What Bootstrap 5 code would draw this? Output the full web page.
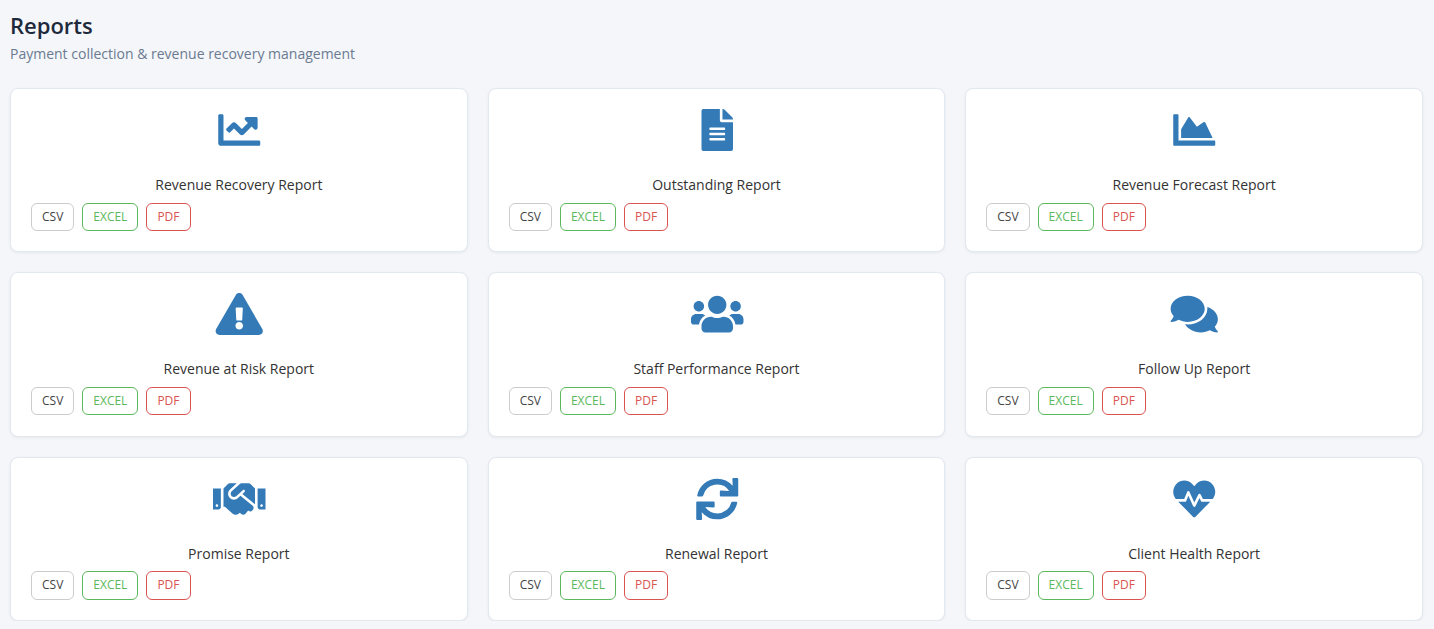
<!DOCTYPE html>
<html lang="en">
<head>
<meta charset="utf-8">
<meta name="viewport" content="width=device-width, initial-scale=1">
<title>Reports</title>
<link href="https://cdn.jsdelivr.net/npm/bootstrap@5.3.0/dist/css/bootstrap.min.css" rel="stylesheet">
<style>
  body { background: #f4f6fa; color: #333; font-family: "Open Sans", sans-serif; font-size: 14px; line-height: 20px; overflow: hidden; }
  .page { padding: 10px 11px 0 10px; }
  .page-title { font-size: 22px; line-height: 30px; font-weight: 600; color: #1e293b; }
  .page-sub { color: #6b7a90; line-height: 20px; margin: 4px 0 24px; }
  .report-row { --bs-gutter-x: 20px; --bs-gutter-y: 20px; }
  .report-card { border: 1px solid #e2e8f0; border-radius: 8px; padding: 20px; box-shadow: 0 1px 3px rgba(0,0,0,.06); height: 164.4px; }
  .report-icon { height: 42px; fill: #337ab7; margin-bottom: 24px; }
  .report-icon path { transform: translateX(5px); }
  .report-icon { overflow: visible; }
  .report-name { margin-bottom: 7.6px; }
  .export { --bs-btn-font-size: 12px; --bs-btn-line-height: 18px; --bs-btn-padding-x: 10px; --bs-btn-padding-y: 4px; --bs-btn-border-radius: 6px; padding-bottom: 4.4px; }
  .export-csv { --bs-btn-color: #444; --bs-btn-border-color: #ccc; }
  .export-excel { --bs-btn-color: #5cb85c; --bs-btn-border-color: #5cb85c; }
  .export-pdf { --bs-btn-color: #d9534f; --bs-btn-border-color: #d9534f; }
</style>
</head>
<body>
<main class="page">
  <h1 class="page-title mb-0">Reports</h1>
  <p class="page-sub">Payment collection &amp; revenue recovery management</p>
  <div class="row report-row" id="reports"></div>
</main>
<script src="https://cdn.jsdelivr.net/npm/bootstrap@5.3.0/dist/js/bootstrap.bundle.min.js"></script>
<script>
const reports = [
  ["Revenue Recovery Report", 512, "M496 384H64V80c0-8.84-7.16-16-16-16H16C7.16 64 0 71.16 0 80v336c0 17.67 14.33 32 32 32h464c8.84 0 16-7.16 16-16v-32c0-8.84-7.16-16-16-16zM464 96H345.94c-21.38 0-32.09 25.85-16.97 40.97l32.4 32.4L288 242.75l-73.37-73.37c-12.5-12.5-32.76-12.5-45.25 0l-68.69 68.69c-6.25 6.25-6.25 16.38 0 22.63l22.62 22.62c6.25 6.25 16.38 6.25 22.63 0L192 237.25l73.37 73.37c12.5 12.5 32.76 12.5 45.25 0l96-96 32.4 32.4c15.12 15.12 40.97 4.41 40.97-16.97V112c.01-8.84-7.15-16-15.99-16z"],
  ["Outstanding Report", 384, "M224 136V0H24C10.7 0 0 10.7 0 24v464c0 13.3 10.7 24 24 24h336c13.3 0 24-10.7 24-24V160H248c-13.2 0-24-10.8-24-24zm64 236c0 6.6-5.4 12-12 12H108c-6.6 0-12-5.4-12-12v-8c0-6.6 5.4-12 12-12h168c6.6 0 12 5.4 12 12v8zm0-64c0 6.6-5.4 12-12 12H108c-6.6 0-12-5.4-12-12v-8c0-6.6 5.4-12 12-12h168c6.6 0 12 5.4 12 12v8zm0-72v8c0 6.6-5.4 12-12 12H108c-6.6 0-12-5.4-12-12v-8c0-6.6 5.4-12 12-12h168c6.6 0 12 5.4 12 12zm96-114.1v6.1H256V0h6.1c6.4 0 12.5 2.5 17 7l97.9 98c4.5 4.5 7 10.6 7 16.9z"],
  ["Revenue Forecast Report", 512, "M500 384c6.6 0 12 5.4 12 12v40c0 6.6-5.4 12-12 12H12c-6.6 0-12-5.4-12-12V76c0-6.6 5.4-12 12-12h40c6.6 0 12 5.4 12 12v308h436zM372.7 159.5L288 216l-85.3-113.7c-5.1-6.8-15.5-6.3-19.9 1L96 248v104h384l-89.9-187.8c-3.2-6.5-11.4-8.7-17.4-4.7z"],
  ["Revenue at Risk Report", 576, "M569.517 440.013C587.975 472.007 564.806 512 527.94 512H48.054c-36.937 0-59.999-40.055-41.577-71.987L246.423 23.985c18.467-32.009 64.72-31.951 83.154 0l239.94 416.028zM288 354c-25.405 0-46 20.595-46 46s20.595 46 46 46 46-20.595 46-46-20.595-46-46-46zm-43.673-165.346l7.418 136c.347 6.364 5.609 11.346 11.982 11.346h48.546c6.373 0 11.635-4.982 11.982-11.346l7.418-136c.375-6.874-5.098-12.654-11.982-12.654h-63.383c-6.884 0-12.356 5.78-11.981 12.654z"],
  ["Staff Performance Report", 640, "M96 224c35.3 0 64-28.7 64-64s-28.7-64-64-64-64 28.7-64 64 28.7 64 64 64zm448 0c35.3 0 64-28.7 64-64s-28.7-64-64-64-64 28.7-64 64 28.7 64 64 64zm32 32h-64c-17.6 0-33.5 7.1-45.1 18.6 40.3 22.1 68.9 62 75.1 109.4h66c17.7 0 32-14.3 32-32v-32c0-35.3-28.7-64-64-64zm-256 0c61.9 0 112-50.1 112-112S381.9 32 320 32 208 82.1 208 144s50.1 112 112 112zm76.8 32h-8.3c-20.8 10-43.9 16-68.5 16s-47.6-6-68.5-16h-8.3C179.6 288 128 339.6 128 403.2V432c0 26.5 21.5 48 48 48h288c26.5 0 48-21.5 48-48v-28.8c0-63.6-51.6-115.2-115.2-115.2zm-223.7-13.4C161.5 263.1 145.6 256 128 256H64c-35.3 0-64 28.7-64 64v32c0 17.7 14.3 32 32 32h65.9c6.3-47.4 34.9-87.3 75.2-109.4z"],
  ["Follow Up Report", 576, "M416 192c0-88.4-93.1-160-208-160S0 103.6 0 192c0 34.3 14.1 65.9 38 92-13.4 30.2-35.5 54.2-35.8 54.5-2.2 2.3-2.8 5.7-1.5 8.7S4.8 352 8 352c36.6 0 66.9-12.3 88.7-25 32.2 15.7 70.3 25 111.3 25 114.9 0 208-71.6 208-160zm122 220c23.9-26 38-57.7 38-92 0-66.9-53.5-124.2-129.3-148.1.9 6.6 1.3 13.3 1.3 20.1 0 105.9-107.7 192-240 192-10.8 0-21.3-.8-31.7-1.9C207.8 439.6 281.8 480 368 480c41 0 79.1-9.2 111.3-25 21.8 12.7 52.1 25 88.7 25 3.2 0 6.1-1.9 7.3-4.8 1.3-2.9.7-6.3-1.5-8.7-.3-.3-22.4-24.2-35.8-54.5z"],
  ["Promise Report", 640, "M434.7 64h-85.9c-8 0-15.7 3-21.6 8.4l-98.3 90c-.1.1-.2.3-.3.4-16.6 15.6-16.3 40.5-2.1 56 12.7 13.9 39.4 17.6 56.1 2.7.1-.1.3-.1.4-.2l79.9-73.2c6.5-5.9 16.7-5.5 22.6 1 6 6.5 5.5 16.6-1 22.6l-26.1 23.9L504 313.8c2.9 2.4 5.5 5 7.9 7.7V128l-54.6-54.6c-5.9-6-14.1-9.4-22.6-9.4zM544 128.2v223.9c0 17.7 14.3 32 32 32h64V128.2h-96zm48 223.9c-8.8 0-16-7.2-16-16s7.2-16 16-16 16 7.2 16 16-7.2 16-16 16zM0 384h64c17.7 0 32-14.3 32-32V128.2H0V384zm48-63.9c8.8 0 16 7.2 16 16s-7.2 16-16 16-16-7.2-16-16c0-8.9 7.2-16 16-16zm435.9 18.6L334.6 217.5l-30 27.5c-29.7 27.1-75.2 24.5-101.7-4.4-26.9-29.4-24.8-74.9 4.4-101.7L289.1 64h-83.8c-8.5 0-16.6 3.4-22.6 9.4L128 128v223.9h18.3l90.5 81.9c27.4 22.3 67.7 18.1 90-9.3l.2-.2 17.9 15.5c15.9 13 39.4 10.5 52.3-5.4l31.4-38.6 5.4 4.4c13.7 11.1 33.9 9.1 45-4.7l9.5-11.7c11.2-13.8 9.1-33.9-4.6-45.1z"],
  ["Renewal Report", 512, "M440.65 12.57l4 82.77A247.16 247.16 0 0 0 255.83 8C134.73 8 33.91 94.92 12.29 209.82A12 12 0 0 0 24.09 224h49.05a12 12 0 0 0 11.67-9.26 175.91 175.91 0 0 1 317-56.94l-101.46-4.86a12 12 0 0 0-12.57 12v47.41a12 12 0 0 0 12 12H500a12 12 0 0 0 12-12V12a12 12 0 0 0-12-12h-47.37a12 12 0 0 0-11.98 12.57zM255.83 432a175.61 175.61 0 0 1-146-77.8l101.8 4.87a12 12 0 0 0 12.57-12v-47.4a12 12 0 0 0-12-12H12a12 12 0 0 0-12 12V500a12 12 0 0 0 12 12h47.35a12 12 0 0 0 12-12.6l-4.15-82.57A247.17 247.17 0 0 0 255.83 504c121.11 0 221.93-86.92 243.55-201.82a12 12 0 0 0-11.8-14.18h-49.05a12 12 0 0 0-11.67 9.26A175.86 175.86 0 0 1 255.83 432z"],
  ["Client Health Report", 512, "M320.2 243.8l-49.7 99.4c-6 12.1-23.4 11.7-28.9-.6l-56.9-126.3-30 71.7H60.6l182.5 186.5c7.1 7.3 18.6 7.3 25.7 0L451.4 288H342.3l-22.1-44.2zM473.7 73.9l-2.4-2.5c-51.5-52.6-135.8-52.6-187.4 0L256 100l-27.9-28.5c-51.5-52.7-135.9-52.7-187.4 0l-2.4 2.4C-10.4 123.7-12.5 203 31 256h102.4l35.9-86.2c5.4-12.9 23.6-13.1 29.2-.4l58.2 129.3 49-97.9c5.9-11.8 22.7-11.8 28.6 0l27.6 55.2H481c43.5-53 41.4-132.3-7.3-182.1z"]
];
document.getElementById("reports").innerHTML = reports.map(([name, width, path]) => `
  <div class="col-4">
    <div class="card report-card">
      <svg class="report-icon" viewBox="0 0 ${width} 512" aria-hidden="true"><path d="${path}"/></svg>
      <div class="report-name text-center">${name}</div>
      <div class="d-flex gap-2">
        <button type="button" class="btn export export-csv">CSV</button>
        <button type="button" class="btn export export-excel">EXCEL</button>
        <button type="button" class="btn export export-pdf">PDF</button>
      </div>
    </div>
  </div>`).join("");
</script>
</body>
</html>
